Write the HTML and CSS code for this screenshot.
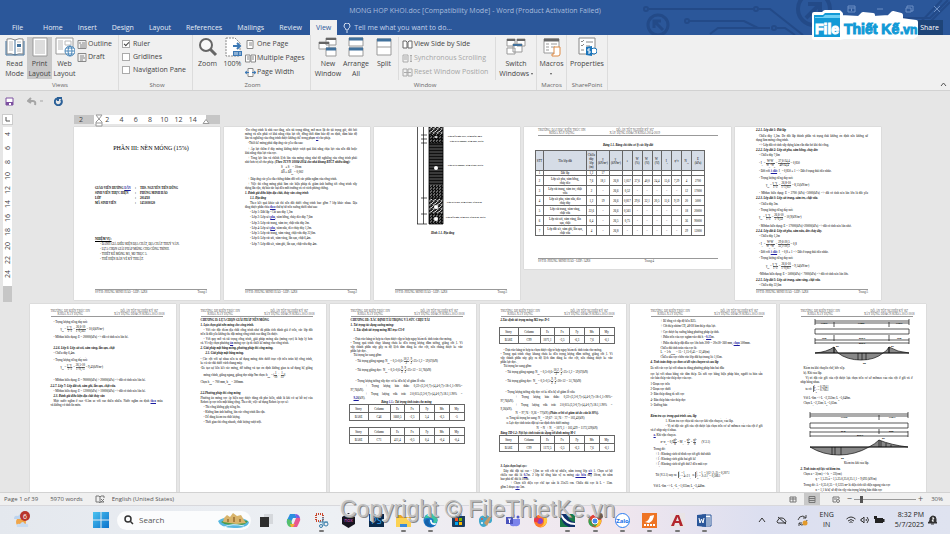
FILE: index.html
```html
<!DOCTYPE html>
<html lang="vi">
<head>
    <meta charset="UTF-8">
    <meta name="viewport" content="width=device-width, initial-scale=1.0">
    <title>MONG HOP KHOI.doc - Word</title>
    <link rel="stylesheet" href="styles.css">
</head>
<body>

<header class="titlebar">
    <svg class="circuit" width="320" height="35" viewBox="0 0 320 35" fill="none" stroke="#234a88" stroke-width="2">
        <path d="M19 9H123M129 9H140L173 35M59 21H114L128 28H140M147 28H155L165 35M80 34L88 28H140"/>
        <circle cx="16" cy="9" r="2"/><circle cx="126" cy="9" r="2"/><circle cx="57" cy="21" r="2"/><circle cx="144" cy="28" r="2"/>
        <circle cx="28" cy="25" r="10" stroke-width="3"/><path d="M33 30L24 21M24 28V21H31" stroke-width="3"/>
        <circle cx="184" cy="9" r="16" stroke-width="4"/><path d="M176 18L190 4M178 4H190V16" stroke-width="4"/>
        <path d="M278 35L312 0M287 35L320 2M262 18H300L318 0"/>
    </svg>
    <div class="caption">
        <span class="doc-name">MONG HOP KHOI.doc [Compatibility Mode] - Word (Product Activation Failed)</span>
        <svg class="win-buttons" width="94" height="8" viewBox="0 0 94 8" fill="none" stroke="#6d8fc4" stroke-width="1">
            <path d="M1 1H8V7H1ZM1 3H8M4.500 6V3.500M30 4H36M59 3H64V7H59ZM60 3V1H66V6H64M87 1L93 7M93 1L87 7"/>
        </svg>
    </div>
    <nav class="tabs">
        <a href="#" class="file">File</a>
        <a href="#">Home</a>
        <a href="#">Insert</a>
        <a href="#">Design</a>
        <a href="#">Layout</a>
        <a href="#">References</a>
        <a href="#">Mailings</a>
        <a href="#">Review</a>
        <a href="#" class="active">View</a>
        <button class="tell-me">
            <svg width="8" height="10" viewBox="0 0 8 10" fill="none" stroke="#d5dff0"><path d="M3 7C3 5 1 5 1 3A3 3 0 0 1 7 3C7 5 5 5 5 7ZM3 9H5"/></svg>
            Tell me what you want to do...
        </button>
        <button class="share">Share</button>
    </nav>
    <svg class="logo" width="108" height="30" viewBox="0 0 108 30">
        <path d="M3 4H12L14 2H28L30 4V7L48 8L52 4L62 5V8L78 7L82 3L90 5V10L105 12V25L102 27H33L28 28H3Z" fill="#fff" stroke="#fff" stroke-width="4" stroke-linejoin="round"/>
        <path d="M3 5H12L14 3H29V27H3Z" fill="#129ad6"/>
        <path d="M4 8H29V5H14L12 7H4Z" fill="#6fd0f5"/>
        <text x="4" y="24" class="logo-file">File</text>
        <text x="33" y="24" class="logo-text">Thiết Kế</text>
        <text x="89" y="24" class="logo-text logo-vn">.vn</text>
    </svg>
</header>

<section class="ribbon">
    <div class="group views">
        <div class="tools">
            <button class="big">
                <svg width="20" height="20" viewBox="0 0 20 20" fill="#fff" stroke="#888"><path d="M2 2Q6 1 10 3Q14 1 18 2V17Q14 16 10 18Q6 16 2 17Z"/><path d="M1 4V18H19V4M10 3V18" fill="none" stroke="#41719c"/><path d="M4 5H8M4 7H8M4 9H8M4 11H8M4 13H8M12 5H16M12 12H16M12 14H16" stroke="#bbb"/><rect x="12" y="7" width="4" height="3" fill="#41719c" stroke="none"/></svg>
                <span>Read<br>Mode</span>
            </button>
            <button class="big selected">
                <svg width="20" height="20" viewBox="0 0 20 20" fill="#fff" stroke="#999"><path d="M3 1H17V19H3Z"/><path d="M5 4H15M5 6H15M5 8H15M5 10H15M5 12H15M5 14H15M5 16H15" stroke="#bbb"/></svg>
                <span>Print<br>Layout</span>
            </button>
            <button class="big">
                <svg width="20" height="20" viewBox="0 0 20 20" fill="#fff" stroke="#999"><path d="M1 1H18V17H1Z"/><path d="M3 4H8M3 6H8M3 8H8M3 10H8M3 12H8M10 4H16V8H10Z" stroke="#bbb"/><circle cx="15" cy="14" r="5" stroke="#4a86b8"/><ellipse cx="15" cy="14" rx="2" ry="5" fill="none" stroke="#4a86b8"/><path d="M10 14H20M11 11H19M11 17H19" stroke="#4a86b8"/></svg>
                <span>Web<br>Layout</span>
            </button>
            <div class="stack">
                <button class="small"><svg width="10" height="9" viewBox="0 0 10 9" fill="none" stroke="#888"><path d="M1 .5H9V8.500H1Z"/><path d="M2 3H4M5 3H8M3 5H8M3 7H8"/></svg>Outline</button>
                <button class="small"><svg width="10" height="9" viewBox="0 0 10 9" fill="none" stroke="#888"><path d="M1 .5H9V8.500H1Z"/><path d="M3 3H7M3 5H8M3 7H6"/></svg>Draft</button>
            </div>
        </div>
        <h2>Views</h2>
    </div>

    <div class="group show">
        <div class="tools">
            <div class="stack">
                <label><input type="checkbox" checked>Ruler</label>
                <label><input type="checkbox">Gridlines</label>
                <label><input type="checkbox">Navigation Pane</label>
            </div>
        </div>
        <h2>Show</h2>
    </div>

    <div class="group zoom">
        <div class="tools">
            <button class="big">
                <svg width="20" height="20" viewBox="0 0 20 20" fill="#f8f8f8" stroke="#666"><circle cx="8" cy="8" r="6" stroke-width="2"/><path d="M12 12L18 18" stroke-width="3"/></svg>
                <span>Zoom</span>
            </button>
            <button class="big">
                <svg width="20" height="20" viewBox="0 0 20 20" fill="#fff" stroke="#888"><path d="M3 1H12L17 6V19H3Z" stroke-dasharray="2 1"/><path d="M10 9H17M14 6L17 9L14 12" fill="none" stroke="#3c78b4" stroke-width="2"/><rect x="10" y="14" width="9" height="5" fill="#3c78b4" stroke="none"/><path d="M12 15V18M14 15V18M17 15V18" stroke="#dce8f4"/></svg>
                <span>100%</span>
            </button>
            <div class="stack">
                <button class="small"><svg width="11" height="9" viewBox="0 0 11 9" fill="#fff" stroke="#888"><path d="M2 .5H8V8.500H2ZM4 3H7M4 5H7"/></svg>One Page</button>
                <button class="small"><svg width="11" height="9" viewBox="0 0 11 9" fill="#fff" stroke="#888"><path d="M.5 1H5V8H.5ZM6 1H10.500V8H6ZM2 3H4M2 5H4M7 3H9M7 5H9"/></svg>Multiple Pages</button>
                <button class="small"><svg width="11" height="9" viewBox="0 0 11 9" fill="#fff" stroke="#888"><path d="M3 .5H8V8.500H3Z"/><path d="M0 4.500H4M7 4.500H11M2 3L0 4.500L2 6M9 3L11 4.500L9 6" stroke="#3c78b4" fill="none"/></svg>Page Width</button>
            </div>
        </div>
        <h2>Zoom</h2>
    </div>

    <div class="group window">
        <div class="tools">
            <button class="big">
                <svg width="20" height="20" viewBox="0 0 20 20" fill="#fff" stroke="#999"><path d="M8 1H18V8H8ZM1 5H11V12H1ZM8 11H18V19H8Z"/><path d="M8 2H18M1 6H11" stroke="#666" stroke-width="2"/><path d="M8 12H18" stroke="#41719c" stroke-width="3"/></svg>
                <span>New<br>Window</span>
            </button>
            <button class="big">
                <svg width="20" height="20" viewBox="0 0 20 20" fill="#fff" stroke="#999"><path d="M3 1H17V9H3ZM3 11H17V19H3Z"/><path d="M3 2H17M3 12H17" stroke="#41719c" stroke-width="3"/></svg>
                <span>Arrange<br>All</span>
            </button>
            <button class="big">
                <svg width="20" height="20" viewBox="0 0 20 20" fill="#fff" stroke="#999"><path d="M3 2H17V18H3ZM3 10H17"/><path d="M3 3H17" stroke="#41719c" stroke-width="3"/></svg>
                <span>Split</span>
            </button>
            <div class="stack divided">
                <button class="small"><svg width="11" height="9" viewBox="0 0 11 9" fill="#fff" stroke="#666"><path d="M1 1H4L5 2V8H1ZM6 2L7 1H10V8H6Z"/></svg>View Side by Side</button>
                <button class="small" disabled><svg width="11" height="9" viewBox="0 0 11 9" fill="none" stroke="#aaa"><path d="M1 1H6V8H1ZM2 3H5M2 5H5M9 1V8M8 2L9 1L10 2M8 7L9 8L10 7"/></svg>Synchronous Scrolling</button>
                <button class="small" disabled><svg width="11" height="9" viewBox="0 0 11 9" fill="none" stroke="#aaa"><path d="M1 1H5V8H1ZM6 1H10V8H6ZM2 4.500H9"/></svg>Reset Window Position</button>
            </div>
            <button class="big switch">
                <svg width="20" height="20" viewBox="0 0 20 20" fill="#fff" stroke="#999"><path d="M1 2H9V9H1ZM11 2H19V9H11ZM1 11H9V17H1ZM7 7H16V15H7Z"/><path d="M1 3H9M11 3H19" stroke="#666" stroke-width="2"/><path d="M7 8H16" stroke="#41719c" stroke-width="2"/></svg>
                <span>Switch<br>Windows <i class="arrow"></i></span>
            </button>
        </div>
        <h2>Window</h2>
    </div>

    <div class="group macros">
        <div class="tools">
            <button class="big">
                <svg width="20" height="20" viewBox="0 0 20 20" fill="#fff" stroke="#999"><path d="M2 2H17V16H2Z"/><path d="M2 3H17" stroke="#666" stroke-width="3"/><path d="M4 7H7M4 10H7M4 13H7M9 7H15M9 10H13" stroke="#999"/><path d="M12 10H18V17Q18 19 16 19H10V17H12Z" stroke="#dd8a45"/></svg>
                <span>Macros<br><i class="arrow"></i></span>
            </button>
        </div>
        <h2>Macros</h2>
    </div>

    <div class="group sharepoint">
        <div class="tools">
            <button class="big">
                <svg width="20" height="20" viewBox="0 0 20 20" fill="#fff" stroke="#888"><path d="M2 1H18V17H2Z"/><path d="M4 4L5 5L7 3M4 8L5 9L7 7M4 13H7M9 5H16M9 9H13M9 13H11" fill="none"/><circle cx="17" cy="14" r="3" stroke="#1b75bb"/><path d="M9 10L15 9V19L9 18Z" fill="#1b75bb" stroke="none"/><path d="M13 12H11V14H13V16H11" stroke="#fff" fill="none"/></svg>
                <span>Properties</span>
            </button>
        </div>
        <h2>SharePoint</h2>
    </div>
    <button class="collapse" aria-label="Collapse the ribbon"><svg width="7" height="5" viewBox="0 0 7 5" fill="none" stroke="#555"><path d="M1 4L3.500 1L6 4"/></svg></button>
</section>

<div class="quick">
    <button aria-label="Save"><svg width="9" height="9" viewBox="0 0 9 9"><path d="M1 1H8V8H1Z" fill="#fff" stroke="#7d50a0"/><path d="M1 5H8V8H1Z" fill="#7d50a0"/><path d="M4 6H6V8H4Z" fill="#fff"/></svg></button>
    <button aria-label="Undo"><svg width="17" height="9" viewBox="0 0 17 9" fill="none" stroke="#a5a5a5"><path d="M4 1L1 4L4 6M1 4H6Q9 4 8 8" stroke-width="2"/><path d="M13 4H16"/></svg></button>
    <button aria-label="Repeat"><svg width="9" height="9" viewBox="0 0 9 9" fill="none" stroke="#2b6098" stroke-width="2"><path d="M3 1.500A3.500 3.500 0 1 0 7 2.500M4 4V1H8"/></svg></button>
</div>

<main class="workspace">
    <div class="side">
        <div class="tab-stop"><svg width="5" height="5" viewBox="0 0 5 5" fill="none" stroke="#555"><path d="M1 0V4H5"/></svg></div>
        <div class="vruler">
            <span>4</span><span>6</span><span>8</span><span>10</span><span>12</span><span>14</span><span>16</span><span>18</span><span>20</span><span>22</span><span>24</span>
            <i></i>
        </div>
    </div>

    <div class="sheets">
        <div class="top-set">
            <div class="hruler">
                <span class="out">2</span>
                <div class="scale"><span>2</span><span>4</span><span>6</span><span>8</span><span>10</span><span>12</span><span>14</span></div>
                <span class="out end"></span>
                <svg class="indent-left" width="8" height="13" viewBox="0 0 8 13" fill="#fff" stroke="#999"><path d="M1 1H7L4 5ZM4 5L7 8V12H1V8ZM1 9H7"/></svg>
                <svg class="indent-right" width="8" height="5" viewBox="0 0 8 5" fill="#fff" stroke="#999"><path d="M1 4.500L4 .5L7 4.500Z"/></svg>
            </div>
            <div class="row">
                <article class="page first">
                    <h1>PHẦN III: NỀN MÓNG (15%)</h1>
                    <table class="info">
                        <tr><td>GIÁO VIÊN HƯỚNG <u>DẪN</u></td><td>:</td><td>THS. NGUYỄN TIẾN DŨNG</td></tr>
                        <tr><td>SINH VIÊN THỰC HIỆN</td><td>:</td><td>PHÙNG MINH HẢO</td></tr>
                        <tr><td>LỚP</td><td>:</td><td>2014X8</td></tr>
                        <tr><td>MÃ SINH VIÊN</td><td>:</td><td>1451030120</td></tr>
                    </table>
                    <p class="t"><span class="line">NHIỆM VỤ:</span></p>
                    <p class="in2">- ĐÁNH GIÁ ĐIỀU KIỆN ĐỊA CHẤT, ĐỊA CHẤT THUỶ VĂN.</p>
                    <p class="in2">- LỰA CHỌN GIẢI PHÁP MÓNG CHO CÔNG TRÌNH.</p>
                    <p class="in2">- THIẾT KẾ MÓNG M1, M2 TRỤC 5.</p>
                    <p class="in2">- THỂ HIỆN BẢN VẼ KỸ THUẬT.</p>
                    <div class="foot"><span>SVTH: PHÙNG MINH HẢO - LỚP: 14X8</span><span>Trang:1</span></div>
                </article>

                <article class="page">
                    <p class="full">-Do công trình là nhà cao tầng, nên tải trọng đứng, mô men lật do tải trọng gió, đòi hỏi<br>móng và nền phải có khả năng chịu lực tốt, đồng thời đảm bảo độ ổn định, đảm bảo độ</p>
                    <p>lún và nghiêng của công trình được khống chế trong phạm <u>vi</u> cho phép.</p>
                    <p class="in1">-Thiết kế móng phải đáp ứng các yêu cầu sau:</p>
                    <p class="full in1 g1">+ Áp lực thêm ở đáy móng không được vượt quá khả năng chịu lực của nền đất hoặc</p>
                    <p>khả năng chịu lực của cọc.</p>
                    <p class="full in1">+ Tổng lực lún và chênh lệch lún của móng cũng như độ nghiêng của công trình phải</p>
                    <p>nhỏ hơn trị số cho phép. <b><i>(Theo TCVN 10304-2014 cho nhà khung BTCT nhiều tầng):</i></b></p>
                    <p class="in5">S<sub>gh</sub> ≤ S<sub>gh</sub> = 10cm</p>
                    <p class="in5">ΔS ≤ ΔS<sub>gh</sub> = 0,002</p>
                    <p class="in1 g2">+ Đáp ứng các yêu cầu chống thấm đối với các phần ngầm của công trình.</p>
                    <p class="full in1">+ Việc thi công móng phải làm các biện pháp để giảm ảnh hưởng tới công trình xây</p>
                    <p>dựng lân cận, dự báo tác hại đến môi trường và có cách phòng chống.</p>
                    <p class="b">1. Đánh giá điều kiện địa chất, thủy văn công trình</p>
                    <p class="b in2">1.1. Địa tầng</p>
                    <p class="full in2">Theo kết quả khảo sát thì nền đất dưới công trình bao gồm 7 lớp khác nhau. Địa</p>
                    <p>tầng được phân chia <u>theo</u> thứ tự từ trên xuống dưới như sau:</p>
                    <p class="in2">- Lớp 1: Đất lấp - Cát san dày 1,2m</p>
                    <p class="in2">- Lớp 2: Lớp sét <u>pha</u>, xám hồng, chảy dẻo dày 7,6m</p>
                    <p class="in2 g1">- Lớp 3: Lớp cát trung, xám tro, chặt vừa dày 2m.</p>
                    <p class="in2">- Lớp 4: Lớp sét <u>pha</u>, xám nâu, dẻo chảy dày 1,2m.</p>
                    <p class="in2">- Lớp 5: Lớp cát trung, xám vàng, chặt vừa dày 22,6m.</p>
                    <p class="in2">- Lớp 6: Lớp cát sỏi, xám vàng, lẫn sạn, chặt 6,4m.</p>
                    <p class="in2 g1">- Lớp 7: Lớp đất sét, xám ghi, lẫn sạn, chặt vừa dày 4m.</p>
                    <div class="foot"><span>SVTH: PHÙNG MINH HẢO - LỚP: 14X8</span><span>Trang:2</span></div>
                </article>

                <article class="page flush">
                    <svg class="strata" width="112" height="98" viewBox="0 0 112 98">
                        <defs>
                            <pattern id="sand" width="4" height="4" patternUnits="userSpaceOnUse"><path d="M0 0H4V4H0Z" fill="#222"/><path d="M0 1L1 0M2 1L3 3M1 3L2 4M3 1H4" stroke="#fff" stroke-width=".8"/></pattern>
                            <pattern id="clay" width="6" height="3" patternUnits="userSpaceOnUse"><path d="M0 0H6V3H0Z" fill="#111"/><path d="M0 1H6" stroke="#999" stroke-width=".6"/></pattern>
                            <pattern id="dots" width="3" height="3" patternUnits="userSpaceOnUse"><path d="M0 0H3V3H0Z" fill="#111"/><path d="M0 1H1M2 2H3" stroke="#fff" stroke-width=".7"/></pattern>
                        </defs>
                        <path d="M34 0H48V8H34Z" fill="url(#sand)"/>
                        <path d="M34 8H48V16H34Z" fill="url(#dots)"/>
                        <path d="M34 16H48V58H34Z" fill="url(#clay)"/>
                        <path d="M34 58H48V72H34Z" fill="url(#dots)"/>
                        <path d="M34 72H48V87H34Z" fill="url(#sand)"/>
                        <path d="M34 87H48V97H34Z" fill="url(#dots)"/>
                        <path d="M34 0V97H48V0M34 8H48M34 12H48M34 16H48M34 71H48M34 87H48" fill="none" stroke="#000" stroke-width=".8"/>
                        <path d="M22.500 0V97M28.500 0V97M22 97H32M26 8H32M26 12H32M26 16H32M26 71H32M26 87H32" stroke="#111" stroke-width=".7"/>
                        <g fill="#fff"><circle cx="41" cy="10" r="1"/><circle cx="41" cy="41" r="2"/><circle cx="41" cy="80" r="2"/><circle cx="41" cy="92" r="2"/></g>
                        <g class="tag">
                            <text x="53" y="10">LỚP ĐẤT SÉT PHA, XÁM NÂU, DẺO</text>
                            <text x="55" y="15">LỚP CÁT TRUNG, XÁM TRO, CHẶT</text>
                            <text x="53" y="39">LỚP CÁT TRUNG, XÁM VÀNG, CHẶT</text>
                            <text x="52" y="76">LỚP CÁT SỎI, XÁM VÀNG, LẪN SẠN</text>
                            <text x="51" y="91">LỚP ĐẤT SÉT, XÁM GHI, LẪN SẠN, CHẶT</text>
                        </g>
                    </svg>
                    <p class="b in5 g6">Hình 1.1. Địa tầng</p>
                    <div class="foot"><span>SVTH: PHÙNG MINH HẢO - LỚP: 14X8</span><span>Trang:3</span></div>
                </article>

                <article class="page wide">
                    <div class="head"><span>TRƯỜNG ĐẠI HỌC KIẾN TRÚC HN<br>KHOA XÂY DỰNG</span><span>ĐỒ ÁN TỐT NGHIỆP KỸ SƯ<br>XÂY DỰNG DD&amp;CN KHÓA 2014-2019</span></div>
                    <p class="b c g6">Bảng 1.1. Bảng chỉ tiêu cơ lý các lớp đất</p>
                    <table class="soil">
                        <thead>
                            <tr><th>STT</th><th>Tên lớp đất</th><th>Chiều<br>dày<br>lớp<br>(m)</th><th>γ<br>(kN/m³)</th><th>γ<sub>s</sub><br>(kN/m³)</th><th>e</th><th>W<br>(%)</th><th>W<sub>L</sub><br>(%)</th><th>W<sub>P</sub><br>(%)</th><th>I<sub>P</sub></th><th>φ°c</th><th>N<sub>30</sub></th><th>E<br>(kPa)</th></tr>
                        </thead>
                        <tbody>
                            <tr class="thin"><td>1</td><td>Đất lấp</td><td>1,2</td><td>17</td><td></td><td></td><td></td><td></td><td></td><td></td><td></td><td></td><td></td></tr>
                            <tr><td>2</td><td>Lớp sét pha, xám hồng,<br>chảy dẻo</td><td>7,6</td><td>18,1</td><td>26,8</td><td>1,057</td><td>37,6</td><td>40,0</td><td>24,4</td><td>15,6</td><td>7,29</td><td>4</td><td>2700</td></tr>
                            <tr><td>3</td><td>Lớp cát trung, xám tro, chặt<br>vừa</td><td>2</td><td>-</td><td>26,6</td><td>0,52</td><td>-</td><td>-</td><td>-</td><td>-</td><td>-</td><td>12</td><td>17000</td></tr>
                            <tr><td>4</td><td>Lớp sét pha, xám nâu, dẻo<br>chảy dày</td><td>1,2</td><td>19</td><td>26,6</td><td>0,817</td><td>29,6</td><td>32,1</td><td>20,5</td><td>11,6</td><td>9,19</td><td>20</td><td>5000</td></tr>
                            <tr><td>5</td><td>Lớp cát trung, xám vàng,<br>chặt vừa</td><td>22,6</td><td>-</td><td>26,6</td><td>0,561</td><td>-</td><td>-</td><td>-</td><td>-</td><td>-</td><td>18</td><td>20000</td></tr>
                            <tr><td>6</td><td>Lớp cát sỏi, xám vàng, lẫn<br>sạn, chặt</td><td>6,4</td><td>-</td><td>26,5</td><td>0,75</td><td>-</td><td>-</td><td>-</td><td>-</td><td>-</td><td>36</td><td>90000</td></tr>
                            <tr><td>7</td><td>Lớp đất sét, xám ghi, lẫn sạn,<br>chặt vừa</td><td>4</td><td>-</td><td>26,8</td><td>-</td><td>-</td><td>-</td><td>-</td><td>-</td><td>-</td><td>29</td><td>12000</td></tr>
                        </tbody>
                    </table>
                    <div class="foot"><span>SVTH: PHÙNG MINH HẢO - LỚP: 14X8</span><span>Trang:4</span></div>
                </article>

                <article class="page">
                    <p class="b">2.2.1. Lớp đất 1: Đất lấp</p>
                    <p class="full in1 g1">Chiều dày 1,2m. Do đất lấp thành phần và trạng thái không ổn định nên không sử</p>
                    <p>dụng làm móng công trình.</p>
                    <p class="in1">=&gt; Lớp đất có tính xây dựng kém cần đào bỏ khi thi công.</p>
                    <p class="b">2.2.2. Lớp đất 2: Lớp sét pha, xám hồng, chảy dẻo</p>
                    <p class="in1">- Chiều dày 7,6m</p>
                    <p class="eq in1 g1">- I<sub>L</sub> = <span class="frac"><span>W-W<sub>p</sub></span><span>W<sub>L</sub>-W<sub>p</sub></span></span> = <span class="frac"><span>37,6-24,4</span><span>40-24,4</span></span> = 0,850</p>
                    <p class="in1 g1">- Đối với <u>λ đất</u>: I<sub>L</sub> = 0,850 ≤ 1 =&gt; Đất ở trạng thái dẻo nhão.</p>
                    <p class="in1 g2">- Trọng lượng riêng đẩy nổi:</p>
                    <p class="eq in3">γ<sub>đn</sub> = <span class="frac"><span>γ<sub>s</sub>-γ<sub>n</sub></span><span>1+e</span></span> = <span class="frac"><span>26,8-10</span><span>1+1,057</span></span> = 8,15(kN/m³)</p>
                    <p class="full in1 g1">- Môđun biến dạng: E = 2700 (kPa) &lt;5000(kPa) =&gt; đất có tính nén lún lớn là đất yếu</p>
                    <p class="b g1">2.2.3. Lớp đất 3: Lớp cát trung, xám tro, chặt vừa.</p>
                    <p class="in1 g1">- Chiều dày 2m.</p>
                    <p class="in1 g1">- Trọng lượng riêng đẩy nổi:</p>
                    <p class="eq in1">γ<sub>đn</sub> = <span class="frac"><span>γ<sub>s</sub>-γ<sub>n</sub></span><span>1+e</span></span> = <span class="frac"><span>26,6-10</span><span>1+0,52</span></span> = 10,9(kN/m³)</p>
                    <p class="in1 g2">- Môđun biến dạng: E = 17000(kPa)&gt;20000(kPa) =&gt; đất có tính nén lún nhỏ.</p>
                    <p class="b">2.2.4. Lớp đất 4: Lớp sét pha, xám nâu, dẻo chảy dày.</p>
                    <p class="in1">- Chiều dày 1,2m</p>
                    <p class="eq in1 g1">- I<sub>L</sub> = <span class="frac"><span>W-W<sub>p</sub></span><span>W<sub>L</sub>-W<sub>p</sub></span></span> = <span class="frac"><span>29,6-20,5</span><span>32,1-20,5</span></span> = 0,8</p>
                    <p class="in1 g1">- Đối với <u>λ đất</u>: I<sub>L</sub> = 0,8 ≤ 1 =&gt; Đất ở trạng thái dẻo nhão.</p>
                    <p class="in1 g1">- Trọng lượng riêng đẩy nổi:</p>
                    <p class="eq in3 g1">γ<sub>đn</sub> = <span class="frac"><span>γ<sub>s</sub>-γ<sub>n</sub></span><span>1+e</span></span> = <span class="frac"><span>26,6-10</span><span>1+0,817</span></span> = 9,14(kN/m³)</p>
                    <p class="in1 g1">-Môđun biến dạng: E = 5000(kPa) &lt; 7000(kPa) =&gt; đất có tính nén lún lớn.</p>
                    <p class="b g1">2.2.5. Lớp đất 5: Lớp cát trung, xám vàng, chặt vừa.</p>
                    <p class="in1">- Chiều dày 22,6m</p>
                    <div class="foot"><span>SVTH: PHÙNG MINH HẢO - LỚP: 14X8</span><span>Trang:5</span></div>
                </article>
            </div>
        </div>

        <div class="row">
            <article class="page tall">
                <div class="head"><span>TRƯỜNG ĐH KIẾN TRÚC HN<br>KHOA XÂY DỰNG</span><span>ĐỒ ÁN TỐT NGHIỆP KỸ SƯ<br>XÂY DỰNG DD&amp;CN KHÓA 2013-2018</span></div>
                <p class="in1 g2">- Trọng lượng riêng đẩy nổi:</p>
                <p class="eq in3">γ<sub>đn</sub> = <span class="frac"><span>γ<sub>s</sub>-γ<sub>n</sub></span><span>1+e</span></span> = <span class="frac"><span>26,6-10</span><span>1+0,561</span></span> = 10,6(kN/m³)</p>
                <p class="in1 g1">- Môđun biến dạng: E = 20000(kPa) =&gt; đất có tính nén lún bé.</p>
                <p class="b in1 g6">2.2.6. Lớp 6: Lớp cát sỏi, xám vàng, lẫn sạn, chặt</p>
                <p class="in1">- Chiều dày 6,4m.</p>
                <p class="in1 g2">- Trọng lượng riêng đẩy nổi:</p>
                <p class="eq in3">γ<sub>đn</sub> = <span class="frac"><span>γ<sub>s</sub>-γ<sub>n</sub></span><span>1+e</span></span> = <span class="frac"><span>26,5-10</span><span>1+0,75</span></span> = 9,43(kN/m³)</p>
                <p class="in1 g6">- Môđun biến dạng: E = 90000(kPa) &gt; 20000(kPa) =&gt; đất có tính nén lún bé.</p>
                <p class="b g1">2.2.7. Lớp 7: Lớp đất sét, xám ghi, lẫn sạn, chặt vừa.</p>
                <p class="in1">- Môđun biến dạng: E = 12000(kPa) &gt; 10000(kPa) =&gt; đất có tính nén lún bé.</p>
                <p class="b in1">2.3. Đánh giá điều kiện địa chất thủy văn</p>
                <p class="full in1">Mực nước ngầm ở cao -0.5m so với cao thiên nhiên. Nước ngầm ổn định <u>theo</u> mùa</p>
                <p>và không có tính ăn mòn.</p>
            </article>

            <article class="page tall">
                <div class="head"><span>TRƯỜNG ĐH KIẾN TRÚC HN<br>KHOA XÂY DỰNG</span><span>ĐỒ ÁN TỐT NGHIỆP KỸ SƯ<br>XÂY DỰNG DD&amp;CN KHÓA 2013-2018</span></div>
                <p class="t">CHƯƠNG II: LỰA CHỌN GIẢI PHÁP NỀN MÓNG</p>
                <p class="b">1. Lựa chọn giải nền móng cho công trình.</p>
                <p class="full in1">- Với các đặc điểm địa chất công trình như đã phân tích đánh giá ở trên, các lớp đất</p>
                <p>trên là đất yếu không thể đặt móng công trình cao tầng lên được.</p>
                <p class="full in1">- Với quy mô và tải trọng công trình, giải pháp móng sâu (móng cọc) là hợp lý hơn</p>
                <p>cả. Vì vậy chọn phương <u>án</u> móng cọc ép để thiết kế móng cho công trình.</p>
                <p class="b">2. Giải pháp mặt bằng móng, phương pháp thi công móng.</p>
                <p class="b in2">2.1. Giải pháp mặt bằng móng.</p>
                <p class="full g1">- Các cột với sự nhau nên ta sử dụng móng đơn dưới trục cột trên toàn bộ công trình,</p>
                <p>kể cả các đài dưới vách thang máy.</p>
                <p class="full">-Để tạo sự liên kết các móng, đỡ tường và tạo ổn định không gian ta sử dụng hệ giằng</p>
                <p class="eq in1 g1">móng chính, giằng ngang, giằng dọc nhịp 9m chọn: h<sub>gm</sub> = (<span class="frac"><span>1</span><span>10</span></span> ÷ <span class="frac"><span>1</span><span>15</span></span>)l</p>
                <p>Chọn h<sub>gm</sub> = 700 mm, b<sub>gm</sub> = 300mm.</p>
                <p class="b g6">2.2.Phương pháp thi công móng</p>
                <p class="full">Phương án móng cọc ép hiện nay được dùng rất phổ biến, nhất là khi có sự hỗ trợ của</p>
                <p>Robot ép cọc trên mặt bằng rộng. Theo đó, việc sử dụng Robot ép cọc sẽ:</p>
                <p class="in1">- Thi công không gây tiếng ồn.</p>
                <p class="in1">- Không làm ảnh hưởng, lún các công trình lân cận.</p>
                <p class="in1">- Dễ dàng kiểm tra chất lượng.</p>
                <p class="in1">- Thời gian thi công nhanh, chất lượng vượt trội.</p>
            </article>

            <article class="page tall">
                <div class="head"><span>TRƯỜNG ĐH KIẾN TRÚC HN<br>KHOA XÂY DỰNG</span><span>ĐỒ ÁN TỐT NGHIỆP KỸ SƯ<br>XÂY DỰNG DD&amp;CN KHÓA 2013-2018</span></div>
                <p class="t">CHƯƠNG III: XÁC ĐỊNH TẢI TRỌNG VÀ SỨC CHỊU TẢI</p>
                <p class="b">1. Tải trọng tác dụng xuống móng:</p>
                <p class="b in1">1. Xác định tải trọng móng M1 trục C5-8</p>
                <p class="in1 g4 tight">- Dựa vào bảng tổ hợp ta chọn được cặp tổ hợp nguy hiểm để tính toán cho móng.</p>
                <p class="full">- Trong quá trình chạy khung chưa kể đến trọng lượng dầm tường, giằng cốt 1. Vì<br>vậy thành phần này gây ra độ lệch tâm đáng kể cho cột, nên chúng được kể vào</p>
                <p class="tight">phần lực dọc.</p>
                <p class="in1 tight">Tải trọng bổ sung gồm:</p>
                <p class="eq in2">- Tải trọng giằng ngang: N<sub>gn</sub> = 0,3×0,6×<span class="frac"><span>10,2</span><span>2</span></span>+<span class="frac"><span>9</span><span>2</span></span>×25×1,2 = 59,67(kN)</p>
                <p class="eq in2">- Tải trọng giằng dọc:&nbsp; N<sub>gd</sub> = 0,3×0,6×<span class="frac"><span>9</span><span>2</span></span>+<span class="frac"><span>9</span><span>2</span></span>×25×12 = 51,76(kN)</p>
                <p class="in2 g4">- Trọng lượng tường xây dọc có kể đến hệ số giảm lỗ cửa:</p>
                <p class="full in4">+ Trọng lượng bản thân: 0,22×(3,3-0,7)×(4,4-0,7)×18×1,1×90%=</p>
                <p class="tight">97,76(kN).</p>
                <p class="full in4">+ Trọng lượng vữa trát: 2.0,015.(3,3-0,7)×(4,4-0,7).18.1,1.90% =</p>
                <p class="in1 tight"><u>9,26</u>(kN).</p>
                <p class="b c tight">Bảng <u>1.1</u>.: Tải trọng tính toán cho móng</p>
                <table class="loads">
                    <tr><td>Story</td><td>Column</td><td>Fz</td><td>Fx</td><td>Fy</td><td>Mx</td><td>My</td></tr>
                    <tr><td>BASE</td><td>C46</td><td>1660,5</td><td>-2,5</td><td>5,4</td><td>-6,5</td><td>-5</td></tr>
                </table>
                <table class="loads g6">
                    <tr><td>Story</td><td>Column</td><td>Fz</td><td>Fx</td><td>Fy</td><td>Mx</td><td>My</td></tr>
                    <tr><td>BASE</td><td>C71</td><td>411,4</td><td>-0,5</td><td>0,4</td><td>-0,4</td><td>-0,4</td></tr>
                </table>
            </article>

            <article class="page tall">
                <div class="head"><span>TRƯỜNG ĐH KIẾN TRÚC HN<br>KHOA XÂY DỰNG</span><span>ĐỒ ÁN TỐT NGHIỆP KỸ SƯ<br>XÂY DỰNG DD&amp;CN KHÓA 2013-2018</span></div>
                <p class="b">2.Xác định tải trọng móng M2 trục D-5</p>
                <table class="loads g4">
                    <tr><td>Story</td><td>Column</td><td>Fz</td><td>Fx</td><td>Fy</td><td>Mx</td><td>My</td></tr>
                    <tr><td>BASE</td><td>C99</td><td>1071,1</td><td>-3,5</td><td>-6,3</td><td>7,6</td><td>-6,1</td></tr>
                </table>
                <p class="in1 g4 tight">- Dựa vào bảng tổ hợp ta chọn được cặp tổ hợp nguy hiểm để tính toán cho móng.</p>
                <p class="full">- Trong quá trình chạy khung chưa kể đến trọng lượng dầm tường, giằng cốt 1. Vì<br>vậy thành phần này gây ra độ lệch tâm đáng kể cho cột, nên chúng được kể vào</p>
                <p class="tight">phần lực dọc.</p>
                <p class="in1 tight">Tải trọng bổ sung gồm:</p>
                <p class="eq in2">- Tải trọng giằng ngang: N<sub>gn</sub> = 0,3×0,6×<span class="frac"><span>10,2</span><span>2</span></span>+<span class="frac"><span>9</span><span>2</span></span>×25×1,2 = 59,67(kN)</p>
                <p class="eq in2">- Tải trọng giằng dọc:&nbsp; N<sub>gd</sub> = 0,3×0,5×<span class="frac"><span>9</span><span>2</span></span>+<span class="frac"><span>9</span><span>2</span></span>×20×12 = 51,76(kN)</p>
                <p class="in2 g4">- Trọng lượng tường xây dọc có kể đến hệ số giảm lỗ cửa:</p>
                <p class="full in4">+ Trọng lượng bản thân: 0,22×(3,3-0,7)×(4,4-0,7)×18×1,1×90%=</p>
                <p class="tight">97,76(kN).</p>
                <p class="full in4">+ Trọng lượng vữa trát: 2.0,015.(3,3-0,7)×(4,4-0,7).18.1,1.90% =</p>
                <p class="tight">9,26(kN).</p>
                <p class="in4">N<sub>t</sub> = 97,76 + 9,26 = 77(kN) <b><i>(Phân cơ bố số giảm tải do cửa là 30%).</i></b></p>
                <p class="in2">⇒ Tổng tải trọng bổ sung: N<sub>bs</sub> = 59,67+ 51,76 + 77 = 103,42(kN)</p>
                <p class="in2">⇒ Lực dọc tính toán đặt tại cao định đơn dưới móng:</p>
                <p class="in5">N<sub>0</sub> = N<sub>0</sub> + N<sub>bs</sub> = 1071,1 + 103,429 = 1173,529(kN)</p>
                <p class="b tight">Bảng TH-1.2: Nội lực tính toán tác dụng tới đỉnh móng M-1</p>
                <table class="loads">
                    <tr><td>Story</td><td>Column</td><td>Fz</td><td>Fx</td><td>Fy</td><td>Mx</td><td>My</td></tr>
                    <tr><td>BASE</td><td>C99</td><td>1172,5</td><td>-3,5</td><td>-6,3</td><td>7,6</td><td>-6,1</td></tr>
                </table>
                <p class="b g12">3. Lựa chọn loại cọc:</p>
                <p class="full in1">Đáy đài đặt tại cao - 1,6m so với cốt tự nhiên, nằm trong lớp <u>sét</u> 1. Chọn sơ bộ<br>chiều cao đài là <u>0,7</u>m. 2 lớp bê tông bảo vệ ra móng <u>các bên</u> dày 10cm, do nằm</p>
                <p class="tight">bao phủ đế đài là 10cm.</p>
                <p class="full in3">+ Chọn tiết diện cọc chế tạo sẵn là 25x25 cm. Chiều dài cọc là L = 15m.</p>
                <p class="tight">gồm 3 đoạn <u>cọc</u> 5m.</p>
            </article>

            <article class="page tall">
                <div class="head"><span>TRƯỜNG ĐH KIẾN TRÚC HN<br>KHOA XÂY DỰNG</span><span>ĐỒ ÁN TỐT NGHIỆP KỸ SƯ<br>XÂY DỰNG DD&amp;CN KHÓA 2013-2018</span></div>
                <p class="in3 g1">+ Bê tông có cấp độ bền B25.</p>
                <p class="in3">+ Cốt thép nhóm CII, 4Φ18 làm thép chịu lực.</p>
                <p class="in3 g1">+ Cọc được hạ xuống bằng phương pháp ép tĩnh.</p>
                <p class="in3">+ Phần trên của cọc ngàm vào đài h<sub>1</sub>=<u>0,15</u>m.</p>
                <p class="in3 g1">+ Phần râu thép đặt đầu cọc lớn hơn 20Φ = 20x18=360 mm, <u>chọn</u> 500mm.</p>
                <p class="in3 tight">Chiều dài tính toán của cọc là:</p>
                <p class="in3">L<sub>tt</sub> = 5-h<sub>ngàm</sub> = 15 - 1,15-0,45 = 12,40(m)</p>
                <p class="in3">Chiều sâu cọc chôn vào lớp đất hạt trung là: 1,05m.</p>
                <p class="b">4. Tính toán thép cọc theo sơ đồ vận chuyển và cẩu lắp</p>
                <p class="g1">Để nối các cọc lại với nhau ta dùng phương pháp hàn hai đầu</p>
                <p class="full g1">cọc lại với nhau bằng các tấm thép. Để nối cọc bằng biện pháp hàn, người ta hàn sẵn</p>
                <p>các bản thép vào thép dọc của cọc.</p>
                <p class="g1">1-Đoạn cọc trên</p>
                <p>2-Đoạn cọc dưới</p>
                <p>3- Bản thép dùng để nối cọc</p>
                <p class="g1">4- Bản thép hàn vào thép dọc</p>
                <p>5- Đường hàn</p>
                <p class="b g6">Kiểm tra cọc trong quá trình cẩu, lắp</p>
                <p class="in4">1. Kiểm tra cọc chịu tải của cọc khi vận chuyển, cẩu lắp.</p>
                <p class="full in4">- Vị trí đặt các gối của cột được lựa chọn trên cơ sở mômen cẩu của cột ở gối</p>
                <p>và ở nhịp này tỉ nhau.</p>
                <p class="in1"><u>a.</u> Khi vận chuyển.</p>
                <p class="eq in3">σ=σ<sub>d</sub> = 0,9<span class="frac"><span>ql²</span><span>8</span></span> = M<sub>1</sub> = <span class="frac"><span>ql²</span><span>2</span></span> = <span class="frac"><span>ql²</span><span>8</span></span> &nbsp; &nbsp; &nbsp; (V.3.1)</p>
                <p class="in1">Trong đó:</p>
                <p class="in2">+ l<sub>1</sub>: Khoảng cách từ đỉnh cọc tới gối thứ nhất</p>
                <p class="in2">+ l<sub>2</sub>: Khoảng cách giữa hai gối kê</p>
                <p class="in2">+ l<sub>3</sub>: Khoảng cách từ gối thứ 2 đến mũi cọc</p>
                <p class="eq in2 g4">Từ (V.3.1) suy ra: <span class="frac plain"><span>l<sub>1</sub> = l<sub>3</sub></span><span>l<sub>2</sub> = 4√2 l<sub>1</sub></span></span> ⇒ <span class="frac plain"><span>l<sub>1</sub> = l<sub>3</sub> = l/(2+2√2) = 0,207.l</span><span>l<sub>2</sub> = 2√2.l<sub>1</sub> = 0,586.l</span></span></p>
                <p class="in1 g4">Với L=6m =&gt; L<sub>1</sub>=L<sub>3</sub>=1,035m; L<sub>2</sub>=3,440m.</p>
            </article>

            <article class="page tall">
                <div class="head"><span>TRƯỜNG ĐH KIẾN TRÚC HN<br>KHOA XÂY DỰNG</span><span>ĐỒ ÁN TỐT NGHIỆP KỸ SƯ<br>XÂY DỰNG DD&amp;CN KHÓA 2013-2018</span></div>
                <svg class="beam" width="112" height="47" viewBox="0 0 112 47" fill="none" stroke="#111" stroke-width=".7">
                    <path d="M14 3H108M14 5H108M14 1V7M108 1V7M33 4V9M88 4V9"/>
                    <path d="M14 11H108V16H14ZM14 22H108M14 25H108M14 20V26M108 20V26M33 17V23M88 17V23"/>
                    <path d="M14 35Q26 34 33 29V35ZM33 35V29L37 35ZM88 35V29Q96 34 108 35ZM88 35V29Q86 33 82 35Z" fill="#888"/>
                    <path d="M37 35Q46 42 60 42Q74 42 82 35Z" fill="#888"/><path d="M14 35H108M57 35V42M61 35V42M65 35V42"/>
                    <g class="dim"><text x="20" y="6">L/(207)</text><text x="57" y="6">L/(586)</text><text x="95" y="6">L/(207)</text><text x="21" y="21">1035</text><text x="58" y="21">2930.0</text><text x="96" y="21">1035</text><text x="58" y="26">5000.0</text><text x="35" y="29">M1</text><text x="90" y="29">M1</text><text x="62" y="46">M2</text></g>
                </svg>
                <p class="in1 g1">Kiểm tra khi chuyên chở, bốc xếp.</p>
                <p class="in1">b). Khi cẩu lắp.</p>
                <p class="full in2">Vị trí đặt các gối của cột được lựa chọn trên cơ sở mômen cẩu của cột ở gối và ở</p>
                <p>nhịp bằng nhau.</p>
                <p class="eq in2">ta có: <span class="frac plain"><span>L<sub>1</sub> = 0.294.l</span><span>L<sub>2</sub> = 0.706.l</span></span></p>
                <p class="in1 g2">Với L=6m =&gt; L<sub>1</sub>=2,352m; L<sub>2</sub>=5,648m.</p>
                <p class="in1">Chọn L<sub>1</sub>=2,35m; L<sub>2</sub>=5,65m.</p>
                <svg class="beam g6" width="112" height="47" viewBox="0 0 112 47" fill="none" stroke="#111" stroke-width=".7">
                    <path d="M9 2H107M9 4H107M9 0V6M107 0V6M78 3V8"/>
                    <path d="M9 11H107V16H9ZM9 20H107M9 24H107M9 19V25M107 19V25M78 17V22"/>
                    <path d="M9 35Q22 43 38 43Q54 43 68 35Z" fill="#888"/><path d="M68 35Q74 32 78 28Q90 33 107 35Z" fill="#888"/>
                    <path d="M9 35H107M31 35V43M34 35V43M40 35V43M78 28V35M80 29V35M85 31V35M90 33V35"/>
                    <g class="dim"><text x="40" y="6">L/(706)</text><text x="88" y="6">L/(294)</text><text x="40" y="20">5648</text><text x="88" y="20">2352</text><text x="56" y="24">8000.0</text><text x="81" y="27">M1</text><text x="40" y="47">M2</text></g>
                </svg>
                <p class="c g2">Kiểm tra khi cẩu lắp.</p>
                <p class="b g1">2. Tính toán nội lực và kiểm tra.</p>
                <p class="in1">Chọn a = 3(cm) =&gt; h<sub>0</sub> = 22(cm)</p>
                <p class="in4">q = 1,5.25.a = 1,5.25.0,25.0,25.1,1 = 9,693 (kN/m)</p>
                <p class="in1 g1">Trong đó: A = 0,35.0,35 = 0,1225 m² là diện tích tiết diện ngang của cọc</p>
                <p class="in4">n = 1,1 là hệ số độ tin cậy của trọng lượng bản thân cọc</p>
            </article>
        </div>
    </div>
</main>

<footer class="status">
    <span class="page-no">Page 1 of 39</span>
    <span class="words">5970 words</span>
    <svg width="10" height="8" viewBox="0 0 10 8" fill="none" stroke="#777"><path d="M1 1H4L5 2V8L4 7H1ZM5 2L6 1H9V3M5 7H9M6 4L9 7M9 4L6 7"/></svg>
    <span class="lang">English (United States)</span>
    <button class="mode" aria-label="Read mode"><svg width="8" height="7" viewBox="0 0 8 7" fill="none" stroke="#777"><path d="M1 1H4V6H1ZM4 1H7V6H4M1 3H7"/></svg></button>
    <button class="mode on" aria-label="Print layout"><svg width="8" height="7" viewBox="0 0 8 7" fill="none" stroke="#777"><path d="M1 .5H7V6.500H1ZM1 2.500H7M1 4.500H7"/></svg></button>
    <button class="mode" aria-label="Web layout"><svg width="8" height="7" viewBox="0 0 8 7" fill="none" stroke="#777"><path d="M1 1H7V3M1 1V6H4M2 3H5"/><circle cx="6" cy="5" r="1.500"/></svg></button>
    <div class="zoom-bar">
        <button aria-label="Zoom out">−</button>
        <input type="range" min="0" max="100" value="10" aria-label="Zoom">
        <button aria-label="Zoom in">+</button>
    </div>
    <span class="percent">30%</span>
</footer>

<footer class="taskbar">
    <button class="weather" aria-label="Weather">
        <svg width="18" height="18" viewBox="0 0 18 18"><circle cx="8" cy="11" r="5" fill="#f0a64a"/><path d="M1 8Q1 4 5 5Q8 1 10 6V8Z" fill="#bcd3ee"/><path d="M4 16Q3 12 7 13Q10 9 12 13Q16 12 15 16Z" fill="#c9dcf2"/><circle cx="12" cy="5" r="5" fill="#b8352b"/><text x="12" y="8" class="badge">6</text></svg>
    </button>
    <button class="start" aria-label="Start">
        <svg width="16" height="16" viewBox="0 0 16 16"><defs><linearGradient id="win" x2="1" y2="1"><stop offset="0" stop-color="#4cc3f0"/><stop offset="1" stop-color="#0a72cc"/></linearGradient></defs><path d="M0 0H7.500V7.500H0ZM8.500 0H16V7.500H8.500ZM0 8.500H7.500V16H0ZM8.500 8.500H16V16H8.500Z" fill="url(#win)"/></svg>
    </button>
    <label class="search">
        <svg width="10" height="10" viewBox="0 0 10 10" fill="none" stroke="#333" stroke-width="1.500"><circle cx="4" cy="4" r="3"/><path d="M6.500 6.500L9 9"/></svg>
        <input type="search" placeholder="Search" aria-label="Search">
        <svg width="32" height="16" viewBox="0 0 32 16"><path d="M0 9Q6 4 14 6Q26 5 31 10Q30 16 16 16Q2 16 0 9Z" fill="#58b8e0"/><path d="M3 10Q8 14 16 12Q26 15 30 9L24 8H7Z" fill="#4e9a48"/><path d="M6 6L9 3L12 5L15 1L19 4L23 3L26 8L28 11L18 12L5 10Z" fill="#d8b46c"/><path d="M9 7H11V10H9ZM15 5H17V10H15ZM21 7H23V10H21Z" fill="#a77e40"/><path d="M6 15Q14 11 26 14" stroke="#d6f0fa" fill="none"/></svg>
    </label>
    <div class="apps">
        <button aria-label="Task view"><svg viewBox="0 0 15 15"><path d="M5 1H14V11H5Z" fill="#d5d8dc"/><path d="M1 4H10V14H1Z" fill="#2e2e2e"/></svg></button>
        <button aria-label="Copilot"><svg viewBox="0 0 15 15"><path d="M4 1H9L11 5H7L4 11H2Q0 10 1 7Z" fill="#2b8fe0"/><path d="M9 1Q13 1 14 5L11 6Z" fill="#7c5ae0"/><path d="M1 6L5 7L7 14H4Q1 13 1 9Z" fill="#55c06c"/><path d="M14 5Q15 7 13 10L11 14H6L8 10L10 5Z" fill="#e8578f"/><path d="M4 11H9L7 14H5Z" fill="#f2b234"/></svg></button>
        <button class="running" aria-label="Snipping Tool"><svg viewBox="0 0 15 15" fill="none"><path d="M2 1H9V8H2Z" stroke="#c8462c" stroke-width="2" stroke-dasharray="1 1"/><path d="M9 4V13M5 9H14" stroke="#4a90b8"/><circle cx="12" cy="11" r="2" stroke="#3a7ca8"/><circle cx="7" cy="13" r="1.500" stroke="#3a7ca8"/></svg></button>
        <button aria-label="Nox"><svg viewBox="0 0 15 15"><path d="M7.500 0L14 4V11L7.500 15L1 11V4Z" fill="#17151f"/><text x="7.500" y="9" class="nox">nox</text></svg></button>
        <button aria-label="Photoshop"><svg viewBox="0 0 15 15"><path d="M0 1H15V14H0Z" fill="#0a2a4c"/><text x="7.500" y="11" class="ps">PS</text></svg></button>
        <button class="running" aria-label="File Explorer"><svg viewBox="0 0 15 15"><path d="M0 2H6L7 4H15V14H0Z" fill="#e9a820"/><path d="M0 5H15V14H0Z" fill="#fbd253"/><path d="M4 11H11V14H4Z" fill="#3b8ad8"/></svg></button>
        <button class="running" aria-label="Edge"><svg viewBox="0 0 15 15"><circle cx="7.500" cy="7.500" r="7" fill="#1b78c8"/><path d="M1 6Q3 0 8 .5Q14 1 14.500 7Q14 11 10 10Q12 6 8 5Q4 4 1 6Z" fill="#3cc4a0"/><path d="M6 6Q4 12 11 13Q5 15 2 11Q1 6 6 6Z" fill="#1560a8"/><path d="M7 7Q9 6 9 9Q10 11 14 10L12 12Q7 12 7 7Z" fill="#fff"/></svg></button>
        <button aria-label="Store"><svg viewBox="0 0 15 15"><path d="M1 3H14V13Q14 14 13 14H2Q1 14 1 13Z" fill="#1a3d60"/><path d="M5 3V1H10V3" stroke="#3b8ad8" fill="none"/><path d="M4 5H7V8H4Z" fill="#f25022"/><path d="M8 5H11V8H8Z" fill="#7fba00"/><path d="M4 9H7V12H4Z" fill="#00a4ef"/><path d="M8 9H11V12H8Z" fill="#ffb900"/></svg></button>
        <button aria-label="Paint"><svg viewBox="0 0 15 15"><path d="M1 9Q0 2 8 2Q15 2 14 8Q13 11 10 10Q9 13 6 14Q2 14 1 9Z" fill="#42a8cc"/><circle cx="4" cy="6" r="1" fill="#e05a3c"/><circle cx="8" cy="4" r="1" fill="#ffd24a"/><circle cx="4" cy="10" r="1" fill="#fff"/><path d="M6 10L12 2L14 3L9 13Z" fill="#c59a68"/></svg></button>
        <button aria-label="Teams"><svg viewBox="0 0 15 15"><circle cx="8" cy="3" r="2" fill="#7b83eb"/><circle cx="13" cy="4" r="1.500" fill="#5059c9"/><path d="M5 6H15V11Q13 14 10 13Q7 14 5 12Z" fill="#7b83eb"/><path d="M1 4H8V11H1Z" fill="#4b53bc"/><path d="M3 6H6M4.500 6V10" stroke="#fff"/></svg></button>
        <button aria-label="Firefox"><svg viewBox="0 0 15 15"><circle cx="7.500" cy="8" r="6.500" fill="#ff7a2b"/><path d="M9 1Q15 4 14 9Q12 14 7 14Q12 12 11 7Q11 4 9 1Z" fill="#ffc83d"/><circle cx="7" cy="8" r="3" fill="#8a42c8"/><path d="M1 8Q1 3 4 3Q4 5 7 5Q5 7 5 9Q2 10 1 8Z" fill="#e8384a"/></svg></button>
        <button class="running" aria-label="WinCamp"><svg viewBox="0 0 15 15"><path d="M0 1H15V14H0Z" fill="#1b7a4a"/><path d="M0 1H7Q9 9 15 9V14H9Q2 12 0 1Z" fill="#12306a"/><path d="M1 2Q6 11 15 11" stroke="#fff" fill="none" stroke-width="2"/></svg></button>
        <button class="running" aria-label="Chrome"><svg viewBox="0 0 15 15"><circle cx="7" cy="8" r="6.500" fill="#e04434"/><path d="M1 5L6 14Q0 13 .5 8Z" fill="#35a351"/><path d="M1 5L7 14L10 11L4 8Z" fill="#35a351"/><path d="M7 14.500Q13 14 13.500 7H8L10 10Z" fill="#fbc22d"/><circle cx="7" cy="8" r="3" fill="#4688f0" stroke="#fff"/><circle cx="12" cy="3" r="3" fill="#6d5a4c"/></svg></button>
        <button class="running" aria-label="Zalo"><svg viewBox="0 0 15 15"><circle cx="7.500" cy="7.500" r="7" fill="#fff" stroke="#2a7cf0"/><text x="7.500" y="10" class="zalo">Zalo</text></svg></button>
        <button class="running" aria-label="Nitro"><svg viewBox="0 0 15 15"><path d="M0 0H15V15H0Z" fill="#ee7424"/><path d="M3 9Q7 8 8 3L12 2Q12 7 7 10Z" fill="#fff"/><path d="M2 12H13" stroke="#fff" stroke-width="2" stroke-dasharray="2 1"/></svg></button>
        <button class="running" aria-label="AutoCAD"><svg viewBox="0 0 15 15"><path d="M0 0H15V15H0Z" fill="#e9e4e6"/><path d="M1 13L6 2H9L13 13H10L9 10H5L4 13ZM6 8H9L7.500 4Z" fill="#b3262c" fill-rule="evenodd"/></svg></button>
        <button class="running" aria-label="Word"><svg viewBox="0 0 15 15"><path d="M5 2H14V13H5Z" fill="#fff" stroke="#2b579a"/><path d="M9 5H13M9 7H13M9 9H13M9 11H13" stroke="#2b579a"/><path d="M0 2L9 1V14L0 13Z" fill="#2b579a"/><path d="M2 5L3 10L4.500 6L6 10L7 5" fill="none" stroke="#fff"/></svg></button>
    </div>
    <div class="tray">
        <svg width="8" height="6" viewBox="0 0 8 6" fill="none" stroke="#333"><path d="M1 5L4 1L7 5"/></svg>
        <svg width="11" height="9" viewBox="0 0 11 9" fill="none" stroke="#333"><path d="M2 7Q0 6 2 4Q3 1 6 2Q8 2 9 4Q11 6 9 7ZM2 1L10 8"/></svg>
        <svg width="11" height="11" viewBox="0 0 11 11" fill="none" stroke="#444"><path d="M1 5Q2 1 6 1L9 3M9 0V3H6M10 5Q9 10 4 10L2 8M2 11V8H5"/><circle cx="8" cy="8" r="2.500" fill="#e39a2c" stroke="none"/></svg>
        <span class="ime">ENG<br>IN</span>
        <svg width="10" height="8" viewBox="0 0 10 8" fill="none" stroke="#333"><path d="M.5 3Q5-1 9.500 3M2 5Q5 2 8 5M3.500 6.500Q5 5 6.500 6.500"/></svg>
        <svg width="10" height="8" viewBox="0 0 10 8" fill="none" stroke="#333"><path d="M1 3H2L4 1V7L2 5H1ZM6 3Q7 4 6 5M7 1Q10 4 7 7"/></svg>
        <svg width="11" height="8" viewBox="0 0 11 8"><path d="M1 2H9V7H1Z" fill="#222"/><path d="M9 3H10.500V6H9ZM0 0H3V3H0Z" fill="#222"/></svg>
        <span class="clock">8:32 PM<br>5/7/2025</span>
        <svg width="9" height="10" viewBox="0 0 9 10"><path d="M1 7L2 5V3Q3 1 5 1Q8 1 8 4V7L9 8H0ZM3 9H6" fill="#333" stroke="#333"/><path d="M4 3H6L4 6H6" stroke="#fff" fill="none"/></svg>
    </div>
</footer>

<div class="watermark">Copyright © FileThietKe.vn</div>

</body>
</html>
```
FILE: styles.css
```css
* {
    box-sizing: border-box;
}

body {
    margin: 0;
    height: 100vh;
    display: flex;
    flex-direction: column;
    overflow: hidden;
    position: relative;
    background-color: #e6e6e6;
    color: #444;
    font-family: 'Open Sans', 'Noto Sans', sans-serif;
    font-size: 7px;
    line-height: 10px;
}

button {
    border: 0;
    padding: 0;
    background: none;
    color: inherit;
    font: inherit;
}

svg {
    display: block;
    flex: none;
}

/* title bar */
.titlebar {
    position: relative;
    z-index: 1;
    background-color: #2b579a;
    color: #e6ecf5;
}

.circuit {
    position: absolute;
    right: 0;
    top: 0;
}

.caption {
    position: relative;
    height: 20px;
    text-align: center;
    color: #a9bddd;
}

.doc-name {
    display: block;
    line-height: 21px;
}

.win-buttons {
    position: absolute;
    right: 9px;
    top: 5px;
}

.tabs {
    position: relative;
    display: flex;
    gap: 1px;
    height: 15px;
    line-height: 15px;
}

.tabs a {
    padding: 0 7px;
    color: inherit;
    text-decoration: none;
}

.tabs .file {
    width: 35px;
    padding-left: 12px;
}

.tabs .active {
    padding: 0 6px;
    background-color: #f0f0f0;
    color: #2b579a;
}

.tell-me {
    display: flex;
    align-items: center;
    gap: 3px;
    margin-left: 5px;
    color: #c5d3ea;
}

.share {
    margin-left: auto;
    margin-right: 7px;
    padding: 0 4px;
    background-color: #1e4478;
    color: #fff;
}

.logo {
    position: absolute;
    right: 31px;
    top: 10px;
    font-family: 'Liberation Sans', sans-serif;
    font-weight: bold;
    font-size: 14px;
    overflow: visible;
}

.logo-text {
    fill: #129ad6;
    stroke: #129ad6;
}

.logo-vn {
    font-size: 12px;
}

.logo-file {
    fill: #fff;
    stroke: #fff;
}

/* ribbon */
.ribbon {
    position: relative;
    display: flex;
    background-color: #f0f0f0;
    border-bottom: 1px solid #d2d2d2;
}

.group {
    display: flex;
    flex-direction: column;
    height: 55px;
    border-right: 1px solid #dcdcdc;
}

.group h2 {
    margin: 0;
    font-size: 6px;
    font-weight: normal;
    line-height: 10px;
    text-align: center;
    color: #666;
}

.tools {
    display: flex;
    flex: 1;
    padding-top: 2px;
}

.views { width: 119px; padding-left: 2px; }
.show { width: 74px; padding-left: 3px; }
.zoom { width: 118px; padding-left: 2px; }
.window { width: 226px; padding-left: 3px; }
.macros { width: 30px; }
.sharepoint { width: 41px; }

.big {
    display: flex;
    flex-direction: column;
    align-items: center;
    width: 25px;
    height: 42px;
    text-align: center;
    white-space: nowrap;
}

.big svg {
    margin-bottom: 2px;
}

.window .big {
    width: 28px;
}

.window .switch {
    width: 40px;
}

.macros .big,
.sharepoint .big {
    width: 100%;
}

.selected {
    background-color: #c8c8c8;
}

.stack {
    display: flex;
    flex-direction: column;
    gap: 3px;
    padding-top: 2px;
    white-space: nowrap;
}

.zoom .stack,
.window .stack {
    gap: 4px;
}

.divided {
    width: 98px;
    padding-left: 3px;
    border-left: 1px solid #dcdcdc;
    border-right: 1px solid #dcdcdc;
}

.small,
.stack label {
    display: flex;
    align-items: center;
    gap: 1px;
    height: 10px;
}

.show .stack label {
    gap: 3px;
}

.stack input {
    appearance: none;
    width: 8px;
    height: 8px;
    margin: 0;
    border: 1px solid #aaa;
    background-color: #fff;
}

.stack input:checked::after {
    content: '';
    display: block;
    width: 4px;
    height: 2px;
    margin: 1px;
    border-left: 1px solid #444;
    border-bottom: 1px solid #444;
    transform: rotate(-45deg);
}

.small:disabled {
    color: #a6a6a6;
}

.arrow {
    display: inline-block;
    vertical-align: middle;
    border: 1px solid transparent;
    border-top: 2px solid #555;
}

.collapse {
    position: absolute;
    right: 3px;
    bottom: 3px;
}

.quick {
    display: flex;
    align-items: center;
    gap: 12px;
    height: 21px;
    padding-left: 5px;
}

.quick button:nth-child(2) {
    margin: 0 -2px 0 1px;
}

/* document area */
.workspace {
    flex: 1;
    display: flex;
    min-height: 0;
    overflow: hidden;
}

.side {
    width: 5px;
    flex: none;
}

.tab-stop {
    display: flex;
    align-items: center;
    justify-content: center;
    width: 11px;
    height: 11px;
    margin: 2px 0 2px 2px;
    border: 1px solid #ccc;
    background-color: #fff;
}

.vruler {
    display: flex;
    flex-direction: column;
    width: 9px;
    height: 175px;
    margin-left: 3px;
    background-color: #fff;
}

.vruler span {
    flex: 1;
    line-height: 9px;
    writing-mode: vertical-rl;
    transform: rotate(180deg);
    text-align: center;
}

.vruler i {
    height: 16px;
    margin-top: 5px;
    background-color: #c6c6c6;
}

.sheets {
    flex: 1;
    display: flex;
    flex-direction: column;
    align-items: center;
    gap: 4px;
}

.hruler {
    position: relative;
    display: flex;
    width: 146px;
    height: 9px;
    margin: 3px 0;
    line-height: 9px;
    background-color: #fff;
}

.out {
    width: 20px;
    padding-left: 5px;
    background-color: #c6c6c6;
}

.out.end {
    width: 14px;
}

.scale {
    flex: 1;
    display: flex;
    padding-left: 6px;
    padding-right: 6px;
}

.scale span {
    flex: 1;
    text-align: center;
}

.indent-left {
    position: absolute;
    left: 21px;
    top: -1px;
}

.indent-right {
    position: absolute;
    right: 10px;
    bottom: 0;
}

.row {
    display: flex;
    align-items: flex-start;
    gap: 4px;
}

.page {
    display: flex;
    flex-direction: column;
    width: 146px;
    height: 173px;
    padding: 1px 13px 6px 21px;
    background-color: #fff;
    box-shadow: 0 0 1px #aaa;
    color: #000;
    font-family: 'Liberation Serif', serif;
    font-size: 3px;
    line-height: 4px;
    white-space: nowrap;
    overflow: hidden;
}

.page.flush {
    padding-top: 0;
}

.page.wide {
    width: 207px;
    height: 142px;
    padding: 2px 13px 6px 14px;
}

.page.tall {
    height: 207px;
    padding-top: 6px;
}

.page p {
    margin: 0 0 1px;
}

.page .b {
    font-weight: bold;
    font-style: italic;
}

.page .t {
    font-weight: bold;
}

.page .c {
    text-align: center;
}

/* every line of these fills the column */
.page .full {
    margin-bottom: 0;
    text-align: justify;
    text-align-last: justify;
    white-space: normal;
}

.page .tight {
    margin-bottom: 0;
}

.page u {
    color: #1c1ca0;
    font-weight: bold;
}

.page .line {
    text-decoration: underline;
}

.page sub {
    font-size: 2px;
    line-height: 0;
}

.page .in1 { text-indent: 3px; }
.page .in2 { text-indent: 5px; }
.page .in3 { text-indent: 10px; }
.page .in4 { text-indent: 15px; }
.page .in5 { text-indent: 36px; }

.page .g1 { margin-top: 1px; }
.page .g2 { margin-top: 2px; }
.page .g4 { margin-top: 4px; }
.page .g6 { margin-top: 6px; }
.page .g12 { margin-top: 12px; }

.page .eq {
    height: 8px;
    line-height: 8px;
}

.frac {
    display: inline-block;
    vertical-align: middle;
    text-indent: 0;
    text-align: center;
    line-height: 3px;
}

.frac span {
    display: block;
}

.frac span + span {
    border-top: 1px solid #777;
}

.frac.plain {
    border-left: 1px solid #777;
    text-align: left;
}

.frac.plain span + span {
    border-top: 0;
}

.first h1 {
    margin: 16px 0 33px;
    font-size: 6px;
    font-weight: normal;
    line-height: 8px;
    text-align: center;
}

.info {
    width: 100%;
    margin-bottom: 32px;
    border-spacing: 0;
    font-weight: bold;
    font-size: 3px;
    line-height: 4px;
}

.info td {
    height: 5px;
    padding: 0;
}

.info td:first-child {
    width: 40px;
}

.info td:nth-child(2) {
    width: 5px;
}

.head {
    display: flex;
    gap: 24px;
    margin-bottom: 1px;
    border-bottom: 1px solid #999;
    line-height: 3px;
    text-align: center;
    color: #555;
}

.foot {
    display: flex;
    justify-content: space-between;
    margin-top: auto;
    border-top: 1px solid #999;
    color: #444;
}

.wide .foot {
    padding-right: 64px;
}

.soil,
.loads {
    border-collapse: collapse;
    table-layout: fixed;
    font-size: 3px;
    line-height: 4px;
    text-align: center;
    color: #000;
}

.soil {
    width: 170px;
    margin: 2px 0 0 -3px;
}

.soil th,
.soil td {
    height: 10px;
    padding: 0;
    border: 1px solid #666;
    font-weight: normal;
}

.soil th {
    height: 20px;
    background-color: #d5dce6;
}

.soil .thin td {
    height: 4px;
}

.soil th:first-child { width: 8px; }
.soil th:nth-child(2) { width: 43px; }
.soil th:nth-child(4),
.soil th:nth-child(5) { width: 13px; }
.soil th:last-child { width: 13px; }

.loads {
    width: 116px;
    margin-left: -2px;
}

.loads td {
    height: 8px;
    padding: 0;
    border: 1px solid #666;
}

.loads td:first-child { width: 19px; }
.loads td:nth-child(2) { width: 22px; }

.tag,
.dim {
    fill: #000;
    stroke: none;
    font-family: 'Liberation Sans', sans-serif;
    font-size: 2px;
    font-weight: bold;
}

/* status bar */
.status {
    display: flex;
    align-items: center;
    height: 13px;
    padding: 0 7px 0 4px;
    background-color: #f0f0f0;
    border-top: 1px solid #d2d2d2;
    font-size: 6px;
    color: #555;
}

.words {
    margin: 0 12px;
}

.lang {
    margin-left: 7px;
    margin-right: auto;
}

.mode {
    display: flex;
    align-items: center;
    justify-content: center;
    width: 16px;
    height: 12px;
    margin-right: 3px;
}

.mode.on {
    background-color: #c8c8c8;
    margin-right: 8px;
}

.zoom-bar {
    display: flex;
    align-items: center;
    gap: 2px;
    margin-right: 8px;
    font-size: 9px;
}

.zoom-bar input {
    appearance: none;
    width: 62px;
    height: 8px;
    margin: 0;
    background: linear-gradient(#999, #999) center / 100% 1px no-repeat;
}

.zoom-bar input::-webkit-slider-thumb {
    appearance: none;
    width: 3px;
    height: 7px;
    background-color: #555;
}

/* taskbar */
.taskbar {
    display: flex;
    align-items: center;
    height: 29px;
    padding: 0 13px;
    background-image: linear-gradient(90deg, #e4e8ee, #edf0f4 35%, #f0e6ee 65%, #dcdff0 80%, #dfe3f0);
    border-top: 1px solid #d8d8dc;
    color: #222;
}

.start {
    margin: 0 8px 0 62px;
}

.search {
    display: flex;
    align-items: center;
    gap: 5px;
    width: 134px;
    height: 19px;
    padding: 0 1px 0 7px;
    border-radius: 10px;
    background-color: #fbfcfd;
}

.search input {
    flex: 1;
    min-width: 0;
    padding: 0;
    border: 0;
    background: none;
    font: inherit;
    font-size: 8px;
}

.search input::placeholder {
    color: #555;
}

.apps {
    display: flex;
    justify-content: space-between;
    width: 453px;
    margin-left: 8px;
}

.apps button {
    position: relative;
    width: 15px;
}

.apps .running::after {
    content: '';
    position: absolute;
    left: 5px;
    bottom: -4px;
    width: 5px;
    height: 2px;
    border-radius: 1px;
    background-color: #777;
}

.badge,
.nox,
.ps,
.zalo {
    fill: #fff;
    font-size: 7px;
    text-anchor: middle;
}

.nox {
    fill: #d85ac8;
    font-size: 5px;
}

.ps {
    fill: #35a5f0;
    font-size: 9px;
}

.zalo {
    fill: #1a6fe8;
    font-size: 6px;
    font-weight: bold;
}

.tray {
    display: flex;
    align-items: center;
    gap: 4px;
    margin-left: auto;
}

.tray svg:nth-child(-n+3) {
    margin-right: 6px;
}

.ime {
    margin: 0 8px 0 2px;
    text-align: center;
}

.clock {
    margin-left: 6px;
    text-align: right;
}

.watermark {
    position: absolute;
    left: 340px;
    bottom: 13px;
    font-family: 'Liberation Sans', sans-serif;
    font-size: 23px;
    line-height: 24px;
    color: #c0c0c0;
    text-shadow: 1px 1px 0 #888, -1px -1px 0 #eee;
    white-space: nowrap;
    pointer-events: none;
}
```
